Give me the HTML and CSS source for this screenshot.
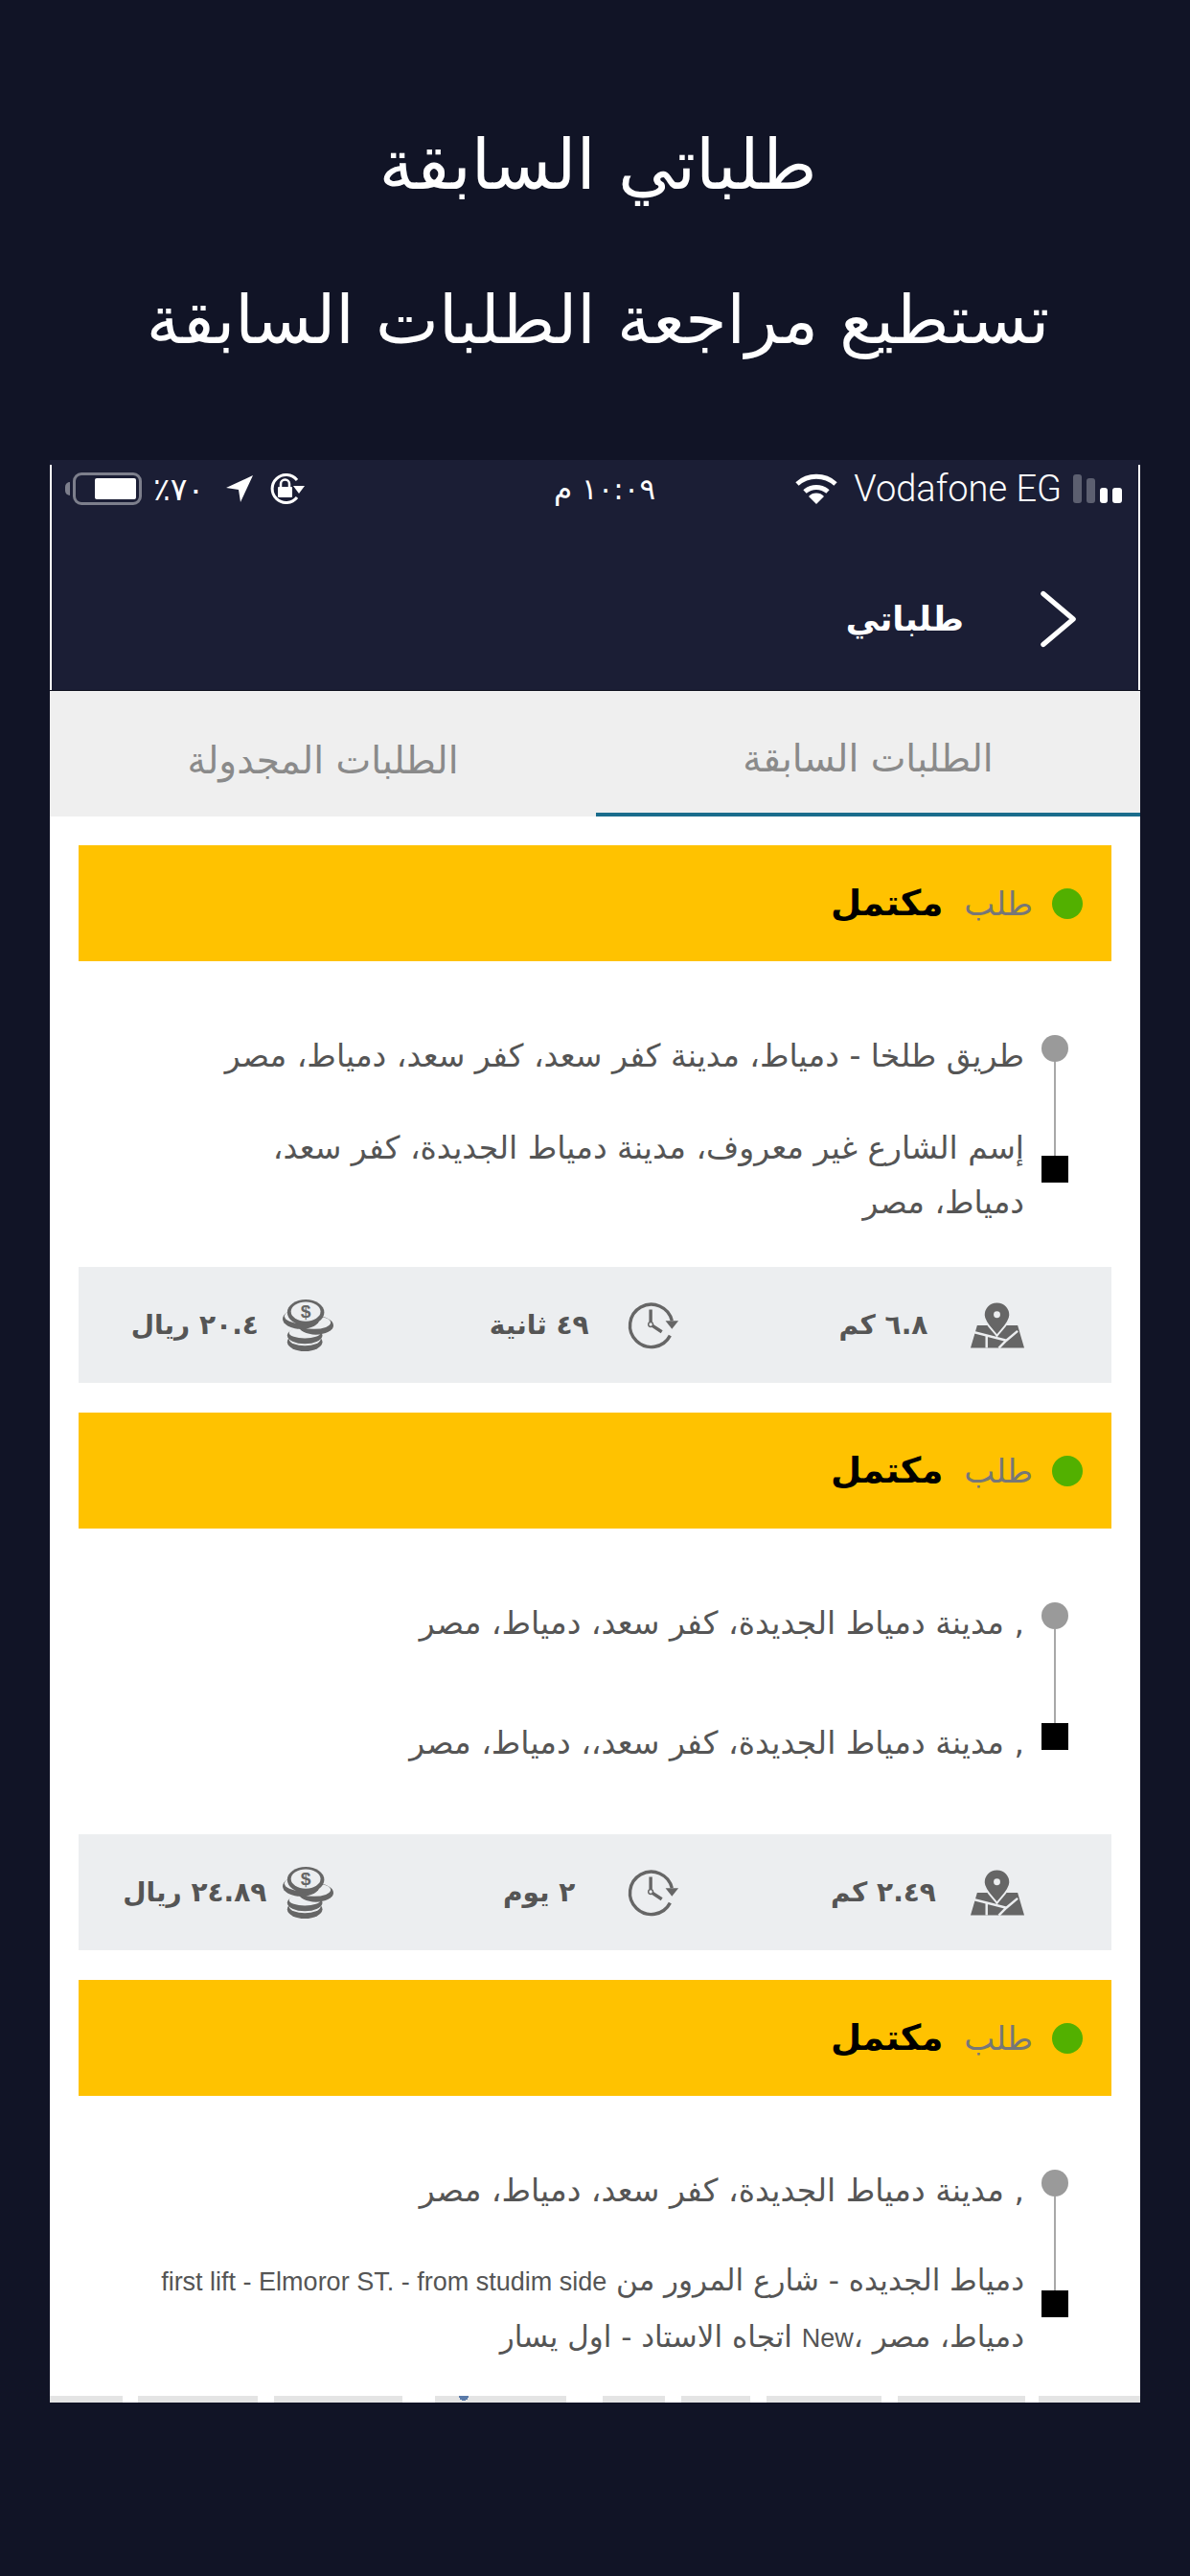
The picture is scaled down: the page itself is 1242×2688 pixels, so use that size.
FILE: index.html
```html
<!DOCTYPE html>
<html lang="ar" dir="rtl">
<head>
<meta charset="utf-8">
<title>طلباتي السابقة</title>
<link rel="stylesheet" href="styles.css">
</head>
<body>
<header class="promo">
  <h1 class="promo-line promo-title">طلباتي السابقة</h1>
  <p class="promo-line">تستطيع مراجعة الطلبات السابقة</p>
</header>
<main class="phone">
  <div class="status">
    <div class="status-group carrier">
      <svg class="signal" viewBox="0 0 52 30"><rect x="0" y="0" width="9" height="30" rx="3" fill="#5c5f70"/><rect x="14" y="4" width="9" height="26" rx="3" fill="#5c5f70"/><rect x="28" y="14" width="8" height="16" rx="3" fill="#fff"/><rect x="41" y="14" width="10" height="16" rx="3" fill="#fff"/></svg>
      <span class="carrier-name" dir="ltr">Vodafone EG</span>
      <svg class="wifi" viewBox="0 0 44 32"><path d="M2 11 A30 30 0 0 1 42 11" fill="none" stroke="#fff" stroke-width="5"/><path d="M10 19 A18 18 0 0 1 34 19" fill="none" stroke="#fff" stroke-width="5"/><path d="M14 24 L22 32 L30 24 A11 11 0 0 0 14 24Z" fill="#fff"/></svg>
    </div>
    <div class="status-time">١٠:٠٩ م</div>
    <div class="status-group system">
      <svg class="rotlock" viewBox="0 0 36 32"><path d="M28 7 A14.500 14.500 0 1 0 28 25" fill="none" stroke="#fff" stroke-width="3"/><path d="M24 13 H36 L30 21Z" fill="#fff"/><rect x="8" y="14" width="15" height="11" rx="1" fill="#fff"/><path d="M11 14 V11 A4.500 4.500 0 0 1 20 11 V14" fill="none" stroke="#fff" stroke-width="2.500"/></svg>
      <svg class="locarrow" viewBox="0 0 28 28"><path d="M28 0 L0 13 L13 15 L15 28Z" fill="#fff"/></svg>
      <span class="battery-pct">٧٠٪</span>
      <div class="battery"><div class="battery-fill"></div></div>
    </div>
  </div>
  <nav class="navbar">
    <svg class="back" viewBox="0 0 40 62"><path d="M3 3 L36 31 L3 59" fill="none" stroke="#fff" stroke-width="5.500" stroke-linecap="round" stroke-linejoin="round"/></svg>
    <span class="nav-title">طلباتي</span>
  </nav>
  <div class="tabs">
    <div class="tab tab-active">الطلبات السابقة</div>
    <div class="tab">الطلبات المجدولة</div>
  </div>
  <section class="orders">
    <article class="order">
      <div class="order-head"><span class="dot-green"></span><span class="head-label">طلب</span><strong class="head-state">مكتمل</strong></div>
      <div class="route">
        <div class="rail"><span class="rail-dot"></span><span class="rail-line"></span><span class="rail-end"></span></div>
        <div class="stops">
          <p class="stop">طريق طلخا - دمياط، مدينة كفر سعد، كفر سعد، دمياط، مصر</p>
          <p class="stop">إسم الشارع غير معروف، مدينة دمياط الجديدة، كفر سعد، دمياط، مصر</p>
        </div>
      </div>
      <div class="stats">
        <div class="stat"><svg class="stat-icon"><use href="#i-map"/></svg><span class="stat-text">٦.٨ كم</span></div>
        <div class="stat"><svg class="stat-icon"><use href="#i-clock"/></svg><span class="stat-text">٤٩ ثانية</span></div>
        <div class="stat"><svg class="stat-icon" viewBox="0 0 56 56"><use href="#i-coins" width="56" height="56"/><text x="25" y="20" text-anchor="middle" class="coin-sign">$</text></svg><span class="stat-text">٢٠.٤ ريال</span></div>
      </div>
    </article>
    <article class="order">
      <div class="order-head"><span class="dot-green"></span><span class="head-label">طلب</span><strong class="head-state">مكتمل</strong></div>
      <div class="route">
        <div class="rail"><span class="rail-dot"></span><span class="rail-line"></span><span class="rail-end"></span></div>
        <div class="stops">
          <p class="stop">, مدينة دمياط الجديدة، كفر سعد، دمياط، مصر</p>
          <p class="stop">, مدينة دمياط الجديدة، كفر سعد،، دمياط، مصر</p>
        </div>
      </div>
      <div class="stats">
        <div class="stat"><svg class="stat-icon"><use href="#i-map"/></svg><span class="stat-text">٢.٤٩ كم</span></div>
        <div class="stat"><svg class="stat-icon"><use href="#i-clock"/></svg><span class="stat-text">٢ يوم</span></div>
        <div class="stat"><svg class="stat-icon" viewBox="0 0 56 56"><use href="#i-coins" width="56" height="56"/><text x="25" y="20" text-anchor="middle" class="coin-sign">$</text></svg><span class="stat-text">٢٤.٨٩ ريال</span></div>
      </div>
    </article>
    <article class="order">
      <div class="order-head"><span class="dot-green"></span><span class="head-label">طلب</span><strong class="head-state">مكتمل</strong></div>
      <div class="route route-last">
        <div class="rail"><span class="rail-dot"></span><span class="rail-line"></span><span class="rail-end"></span></div>
        <div class="stops">
          <p class="stop">, مدينة دمياط الجديدة، كفر سعد، دمياط، مصر</p>
          <p class="stop stop-long">دمياط الجديده - شارع المرور من <span class="latin">first lift - Elmoror ST. - from studim side</span><br>دمياط، مصر ،<span class="latin">New</span> اتجاه الاستاد - اول يسار</p>
        </div>
      </div>
    </article>
  </section>
  <div class="peek"></div>
</main>
<svg class="defs" width="0" height="0">
  <symbol id="i-map" viewBox="0 0 57 52">
    <path d="M7 26 H50 L57 50 H0Z" fill="#666"/>
    <path d="M3 33 L38 42 M38 42 L50 32 M38 42 L30 50 M17 36 V50" fill="none" stroke="#eceef0" stroke-width="2.500"/>
    <path d="M28 1 C19 1 14 8 14 15 C14 23 23 30 28 37 C33 30 42 23 42 15 C42 8 37 1 28 1Z" fill="#666" stroke="#eceef0" stroke-width="2"/>
    <circle cx="28" cy="14.500" r="3.500" fill="#eceef0"/>
  </symbol>
  <symbol id="i-clock" viewBox="0 0 58 52">
    <path d="M47 37 A23 23 0 1 1 49 21" fill="none" stroke="#666" stroke-width="3.500"/>
    <path d="M42 21 H56 L49 30Z" fill="#666"/>
    <path d="M26 9 V25 L38 33" fill="none" stroke="#666" stroke-width="3.500"/>
    <circle cx="26" cy="25" r="2.500" fill="#eceef0" stroke="#666" stroke-width="1.500"/>
  </symbol>
  <symbol id="i-coins" viewBox="0 0 56 56">
    <ellipse cx="24" cy="46" rx="19" ry="10" fill="#666"/>
    <ellipse cx="24" cy="43" rx="17" ry="7" fill="#eceef0"/>
    <ellipse cx="24" cy="39" rx="19" ry="9" fill="#666"/>
    <ellipse cx="24" cy="36" rx="17" ry="6" fill="#eceef0"/>
    <ellipse cx="36" cy="28" rx="19" ry="10" fill="#666"/>
    <ellipse cx="34" cy="25" rx="18" ry="7" fill="#eceef0"/>
    <ellipse cx="20" cy="21" rx="20" ry="11" fill="#666"/>
    <ellipse cx="20" cy="18" rx="18" ry="8" fill="#eceef0"/>
    <ellipse cx="25" cy="14" rx="20" ry="14" fill="#666"/>
    <ellipse cx="25" cy="13" rx="16" ry="10.500" fill="#eceef0"/>
  </symbol>
</svg>
</body>
</html>
```
FILE: styles.css
```css
* { box-sizing: border-box; }
html, body { margin: 0; padding: 0; }
body {
  width: 1242px;
  height: 2688px;
  background: #111426;
  font-family: "DejaVu Sans", "Noto Sans", sans-serif;
}
.promo { height: 480px; padding: 90px 0 0 6px; text-align: center; color: #fff; }
.promo-line { margin: 0; font-size: 70px; font-weight: 400; line-height: 163px; white-space: nowrap; }
.promo-title { font-size: 73px; }
.phone {
  width: 1138px;
  height: 2027px;
  margin-left: 52px;
  margin-right: 52px;
  background: #fff;
  display: flex;
  flex-direction: column;
}
.status {
  height: 60px;
  flex: none;
  background:
    linear-gradient(#1b1e35, #1b1e35) top / 100% 5px no-repeat,
    linear-gradient(90deg, #fff 2px, #1b1e35 2px, #1b1e35 1136px, #fff 1136px);
  display: flex;
  justify-content: space-between;
  align-items: center;
  padding: 0 18px 0 24px;
  color: #fff;
}
.status-group { display: flex; align-items: center; }
.carrier { width: 345px; }
.signal { width: 52px; height: 30px; flex: none; }
.carrier-name { font-family: "Roboto", "Liberation Sans", sans-serif; font-weight: 300; font-size: 38px; margin: 0 12px; white-space: nowrap; }
.wifi { width: 44px; height: 32px; margin-right: 5px; flex: none; }
.status-time { font-size: 31px; white-space: nowrap; margin-left: 14px; }
.system { width: 345px; gap: 18px; justify-content: flex-end; }
.rotlock { width: 36px; height: 32px; flex: none; }
.locarrow { width: 28px; height: 28px; flex: none; }
.battery-pct { font-size: 33px; margin-left: -6px; margin-right: 5px; }
.battery {
  width: 72px;
  height: 34px;
  border: 3px solid #7d7f8c;
  border-radius: 9px;
  padding: 3px;
  display: flex;
  justify-content: flex-start;
  position: relative;
}
.battery::before {
  content: "";
  position: absolute;
  left: -11px;
  top: 7px;
  width: 5px;
  height: 14px;
  border-radius: 5px 0 0 5px;
  background: #7d7f8c;
}
.battery-fill { width: 43px; background: #fff; border-radius: 2px; }
.navbar {
  height: 181px;
  flex: none;
  background: linear-gradient(90deg, #fff 2px, #1b1e35 2px, #1b1e35 1136px, #fff 1136px);
  display: flex;
  align-items: center;
  padding: 31px 66px 0 0;
  color: #fff;
  border-bottom: 1px solid #0d0f1c;
}
.back { width: 38px; height: 62px; flex: none; }
.nav-title { font-size: 35px; font-weight: 700; margin-right: 80px; }
.tabs { height: 131px; display: flex; background: #efefef; flex: none; }
.tab { flex: 1; display: flex; align-items: center; justify-content: center; font-size: 39px; color: #8a8a8a; padding-top: 14px; }
.tab-active { border-bottom: 4px solid #1a6c8c; flex: 0 0 568px; }
.orders { flex: 1; padding: 30px 30px 0; display: flex; flex-direction: column; gap: 31px; }
.order { flex: none; }
.order-head { height: 121px; background: #ffc200; display: flex; align-items: center; padding: 0 30px 0 0; }
.dot-green { width: 32px; height: 32px; border-radius: 50%; background: #52b000; flex: none; }
.head-label { font-size: 34px; color: #777; margin-right: 20px; }
.head-state { font-size: 37px; color: #000; margin-right: 22px; }
.route { height: 319px; display: flex; padding-right: 45px; }
.route-last { height: 313px; }
.rail { width: 28px; flex: none; padding-top: 77px; display: flex; flex-direction: column; align-items: center; }
.rail-dot { width: 28px; height: 28px; border-radius: 50%; background: #9a9a9a; flex: none; }
.rail-line { width: 2px; height: 98px; background: #a8a8a8; flex: none; }
.rail-end { width: 28px; height: 28px; background: #000; flex: none; }
.stops { flex: 1; min-width: 0; margin-right: 18px; padding: 60px 0 0 127px; display: grid; grid-template-rows: 76px 114px; row-gap: 30px; }
.stop { margin: 0; font-size: 33px; line-height: 57px; color: #555; align-self: center; }
.stop-long { white-space: nowrap; font-size: 31px; }
.latin { font-family: "Liberation Sans", sans-serif; font-size: 27px; }
.stats { height: 121px; background: #eceef0; display: grid; grid-template-columns: repeat(3, 1fr); }
.stat { display: flex; align-items: center; padding-right: 91px; }
.stat-icon { width: 56px; height: 54px; flex: none; }
.stat-text { width: 182px; flex: none; text-align: center; font-size: 28px; font-weight: 700; color: #555; white-space: nowrap; }
.coin-sign { font-size: 20px; font-weight: 700; fill: #666; font-family: "Liberation Sans", sans-serif; }
.peek {
  height: 7px;
  flex: none;
  background:
    radial-gradient(circle 5px at 432px 0, #5a7aa8 99%, transparent),
    linear-gradient(90deg, #e4e4e4 0 76px, #fff 76px 92px, #e4e4e4 92px 217px, #fff 217px 234px, #e4e4e4 234px 368px, #fff 368px 402px, #e4e4e4 402px 539px, #fff 539px 577px, #e4e4e4 577px 642px, #fff 642px 659px, #e4e4e4 659px 731px, #fff 731px 748px, #e4e4e4 748px 868px, #fff 868px 885px, #e4e4e4 885px 1018px, #fff 1018px 1032px, #e4e4e4 1032px);
}
.defs { position: absolute; }
```
